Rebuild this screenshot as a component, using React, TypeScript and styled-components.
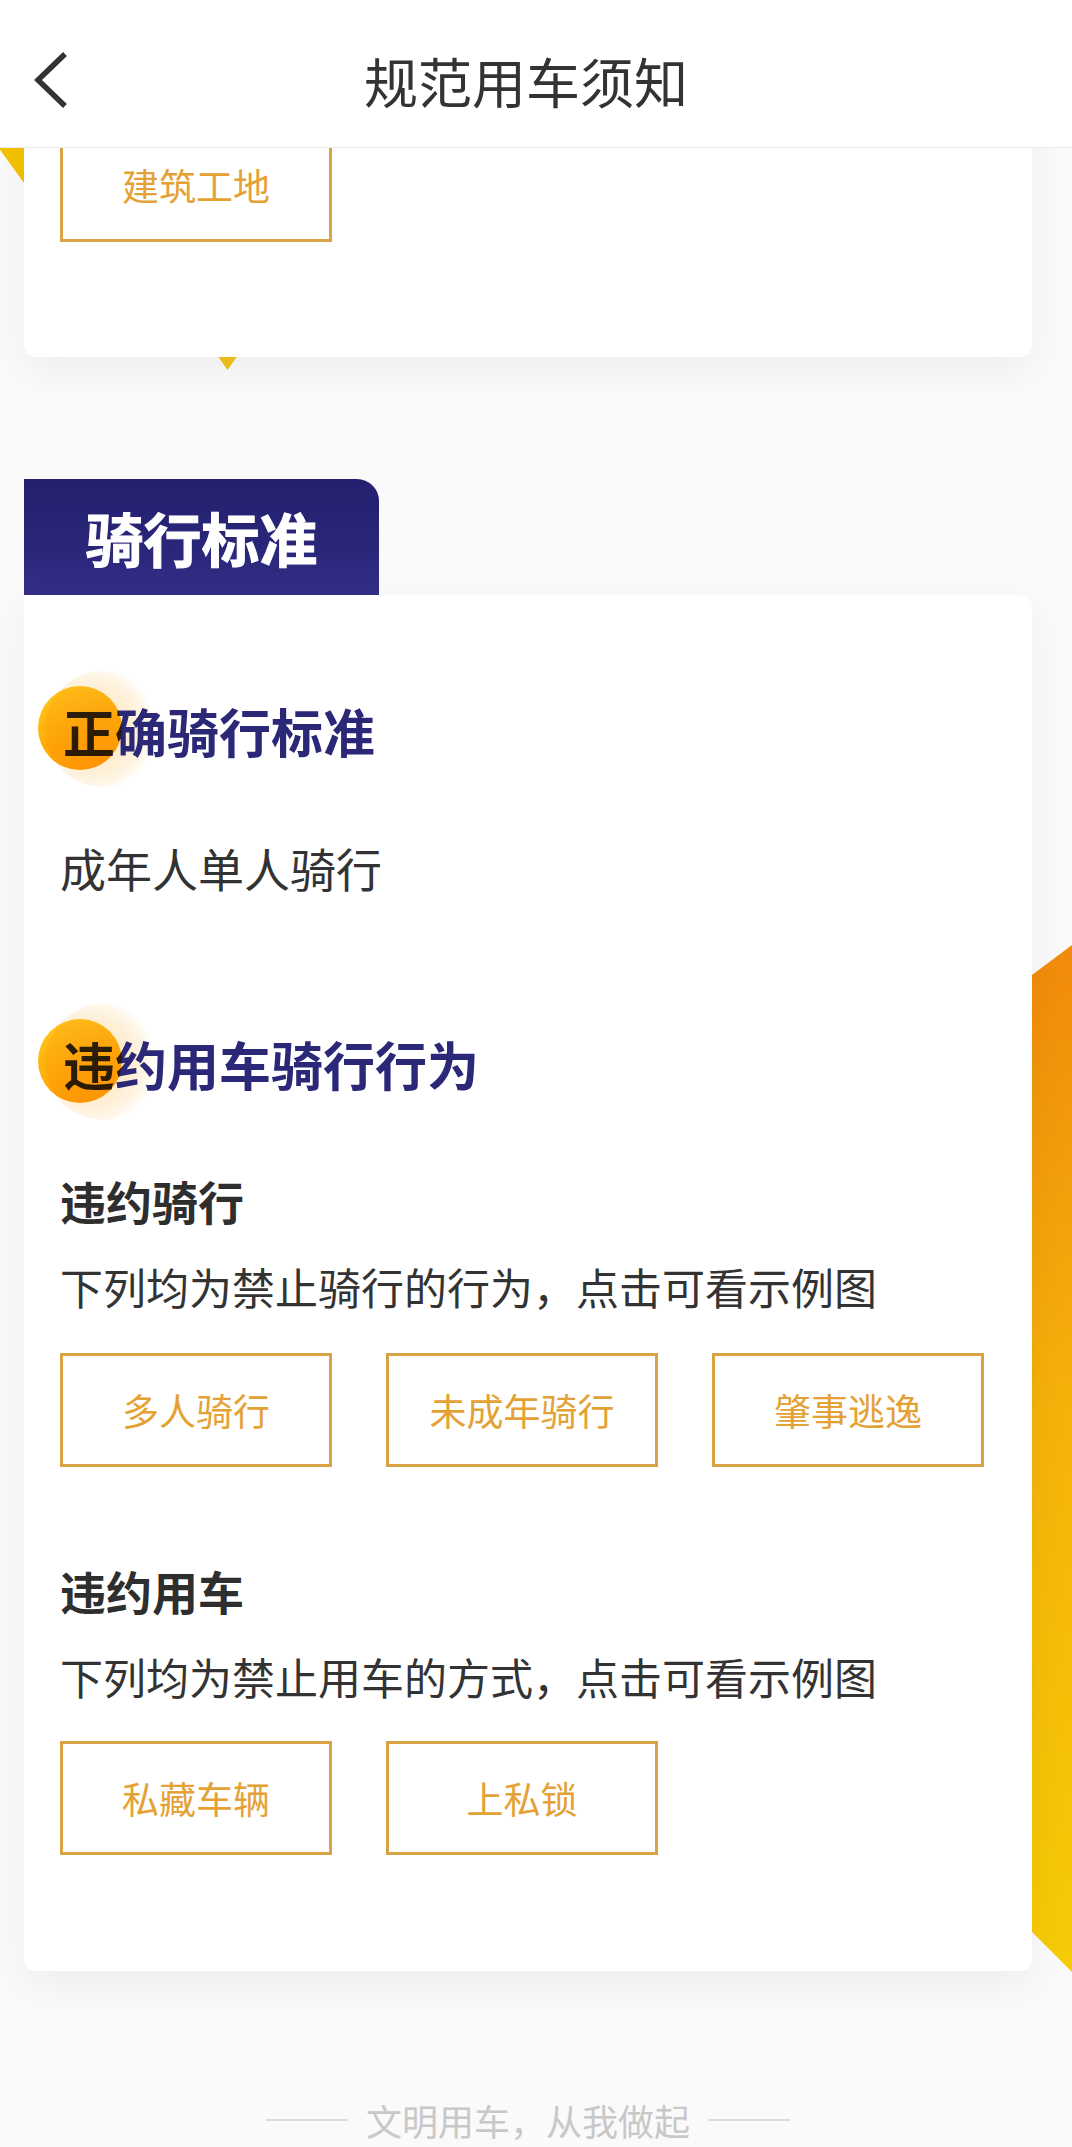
import styled, { createGlobalStyle } from "styled-components"

const GlobalStyle = createGlobalStyle`
    body {
        margin: 0;
        background: #fafafa;
        font-family: "Noto Sans CJK SC", "Noto Sans", sans-serif;
    }
`

const Page = styled.div`
    position: relative;
    width: 1072px;
    min-height: 2147px;
    overflow: hidden;
`

const Header = styled.header`
    position: fixed;
    top: 0;
    left: 0;
    width: 1072px;
    height: 148px;
    background: #fff;
    border-bottom: 1px solid #ececec;
    box-sizing: border-box;
    display: grid;
    grid-template-columns: 110px 1fr 130px;
    align-items: center;
    z-index: 20;
`

const BackButton = styled.button`
    border: 0;
    background: none;
    padding: 12px 0 0 32px;
    height: 72px;
    display: flex;
    align-items: center;
    cursor: pointer;
`

const HeaderTitle = styled.h1`
    margin: 0;
    text-align: center;
    font-size: 54px;
    font-weight: 400;
    color: #333;
    line-height: 1;
    padding-top: 14px;
`

const Deco = styled.svg<{ $left: number; $top: number }>`
    position: absolute;
    left: ${(p) => p.$left}px;
    top: ${(p) => p.$top}px;
    z-index: 0;
`

const Main = styled.main`
    position: relative;
    z-index: 1;
    padding: 0 40px 0 24px;
    display: flex;
    flex-direction: column;
`

const Card = styled.section<{ $attached?: boolean; $pad: string; $mt?: number }>`
    background: #fff;
    border-radius: ${(p) => (p.$attached ? "0 12px 12px 12px" : "12px")};
    box-shadow: 0 14px 40px rgba(0, 0, 0, 0.05);
    padding: ${(p) => p.$pad};
    margin-top: ${(p) => p.$mt ?? 0}px;
    display: flex;
    flex-direction: column;
    align-items: flex-start;
`

const Tab = styled.div`
    margin-top: 122px;
    width: 355px;
    height: 116px;
    border-radius: 0 22px 0 0;
    background: linear-gradient(180deg, #24206f 0%, #2a2679 60%, #332f88 100%);
    color: #fff;
    font-size: 58px;
    font-weight: 700;
    display: flex;
    align-items: center;
    justify-content: center;
    -webkit-text-stroke: 1px #fff;
`

const SectionTitle = styled.h2<{ $mt?: number }>`
    position: relative;
    isolation: isolate;
    margin: ${(p) => p.$mt ?? 0}px 0 0 3px;
    font-size: 52px;
    line-height: 72px;
    font-weight: 700;
    color: #2b2878;
`

const Halo = styled.span`
    position: absolute;
    left: -18px;
    top: -24px;
    width: 116px;
    height: 116px;
    border-radius: 50%;
    background: radial-gradient(circle at 40% 50%, #fde6b8 0%, #feefd4 45%, #fff6e8 62%, rgba(255, 250, 240, 0) 71%);
    z-index: -1;
`

const Dot = styled.span`
    position: absolute;
    left: -25px;
    top: -9px;
    width: 84px;
    height: 84px;
    border-radius: 50%;
    background: linear-gradient(165deg, #ffc91f 0%, #ffb20c 50%, #ff9c00 100%);
    mix-blend-mode: multiply;
    z-index: 1;
`

const Body = styled.p<{ $mt?: number; $size?: number }>`
    margin: ${(p) => p.$mt ?? 0}px 0 0;
    font-size: ${(p) => p.$size ?? 43}px;
    line-height: 60px;
    color: #333;
`

const SubTitle = styled.h3<{ $mt?: number }>`
    margin: ${(p) => p.$mt ?? 0}px 0 0;
    font-size: 46px;
    line-height: 60px;
    font-weight: 700;
    color: #2e2e2e;
`

const ButtonRow = styled.div<{ $mt?: number }>`
    margin-top: ${(p) => p.$mt ?? 0}px;
    display: flex;
    gap: 54px;
`

const ExampleButton = styled.button`
    width: 272px;
    height: 114px;
    box-sizing: border-box;
    border: 3px solid #d9a446;
    background: #fff;
    color: #e4a236;
    font-family: "Noto Sans CJK SC", "Noto Sans", sans-serif;
    font-size: 37px;
    display: flex;
    align-items: center;
    justify-content: center;
    cursor: pointer;
`

const Footer = styled.footer`
    margin-top: 124px;
    display: flex;
    align-items: center;
    justify-content: center;
    gap: 18px;
    font-size: 36px;
    line-height: 50px;
    color: #c8c8c8;

    &::before,
    &::after {
        content: "";
        width: 82px;
        height: 2px;
        background: #dcdcdc;
    }
`

function Title({ text, mt }: { text: string; mt?: number }) {
    return (
        <SectionTitle $mt={mt}>
            <Halo />
            {text}
            <Dot />
        </SectionTitle>
    )
}

function Buttons({ items, mt }: { items: string[]; mt: number }) {
    return (
        <ButtonRow $mt={mt}>
            {items.map((item) => (
                <ExampleButton key={item}>{item}</ExampleButton>
            ))}
        </ButtonRow>
    )
}

export default function App() {
    return (
        <Page>
            <GlobalStyle />
            <Header>
                <BackButton aria-label="back">
                    <svg width="36" height="56" viewBox="0 0 36 56">
                        <path d="M31 4 L6 28 L31 52" fill="none" stroke="#333" strokeWidth="5.5" strokeLinecap="square" />
                    </svg>
                </BackButton>
                <HeaderTitle>规范用车须知</HeaderTitle>
                <div />
            </Header>

            {/* decorations peeking out behind the cards */}
            <Deco $left={0} $top={130} width="50" height="80" viewBox="0 0 50 80">
                <polygon points="-10,6 40,6 40,75" fill="#f5c200" />
            </Deco>
            <Deco $left={205} $top={340} width="45" height="35" viewBox="0 0 45 35">
                <polygon points="5,5 40,5 22.5,30" fill="#f2c31c" />
            </Deco>
            <Deco $left={1000} $top={930} width="72" height="1060" viewBox="0 0 72 1060">
                <defs>
                    <linearGradient id="strip" x1="0" y1="0" x2="0" y2="1">
                        <stop offset="0%" stopColor="#f18a0c" />
                        <stop offset="45%" stopColor="#f5b20a" />
                        <stop offset="100%" stopColor="#f6cb06" />
                    </linearGradient>
                </defs>
                <polygon points="0,69 72,15 72,1042 0,970" fill="url(#strip)" />
            </Deco>

            <Main>
                <Card $pad="88px 36px 115px" $mt={40}>
                    <ExampleButton>建筑工地</ExampleButton>
                </Card>

                <Tab>骑行标准</Tab>
                <Card $attached $pad="100px 36px 116px">
                    <Title text="正确骑行标准" />
                    <Body $mt={70} $size={46}>成年人单人骑行</Body>

                    <Title text="违约用车骑行行为" mt={131} />
                    <SubTitle $mt={70}>违约骑行</SubTitle>
                    <Body $mt={26}>下列均为禁止骑行的行为，点击可看示例图</Body>
                    <Buttons items={["多人骑行", "未成年骑行", "肇事逃逸"]} mt={37} />

                    <SubTitle $mt={93}>违约用车</SubTitle>
                    <Body $mt={26}>下列均为禁止用车的方式，点击可看示例图</Body>
                    <Buttons items={["私藏车辆", "上私锁"]} mt={35} />
                </Card>

                <Footer>文明用车，从我做起</Footer>
            </Main>
        </Page>
    )
}
